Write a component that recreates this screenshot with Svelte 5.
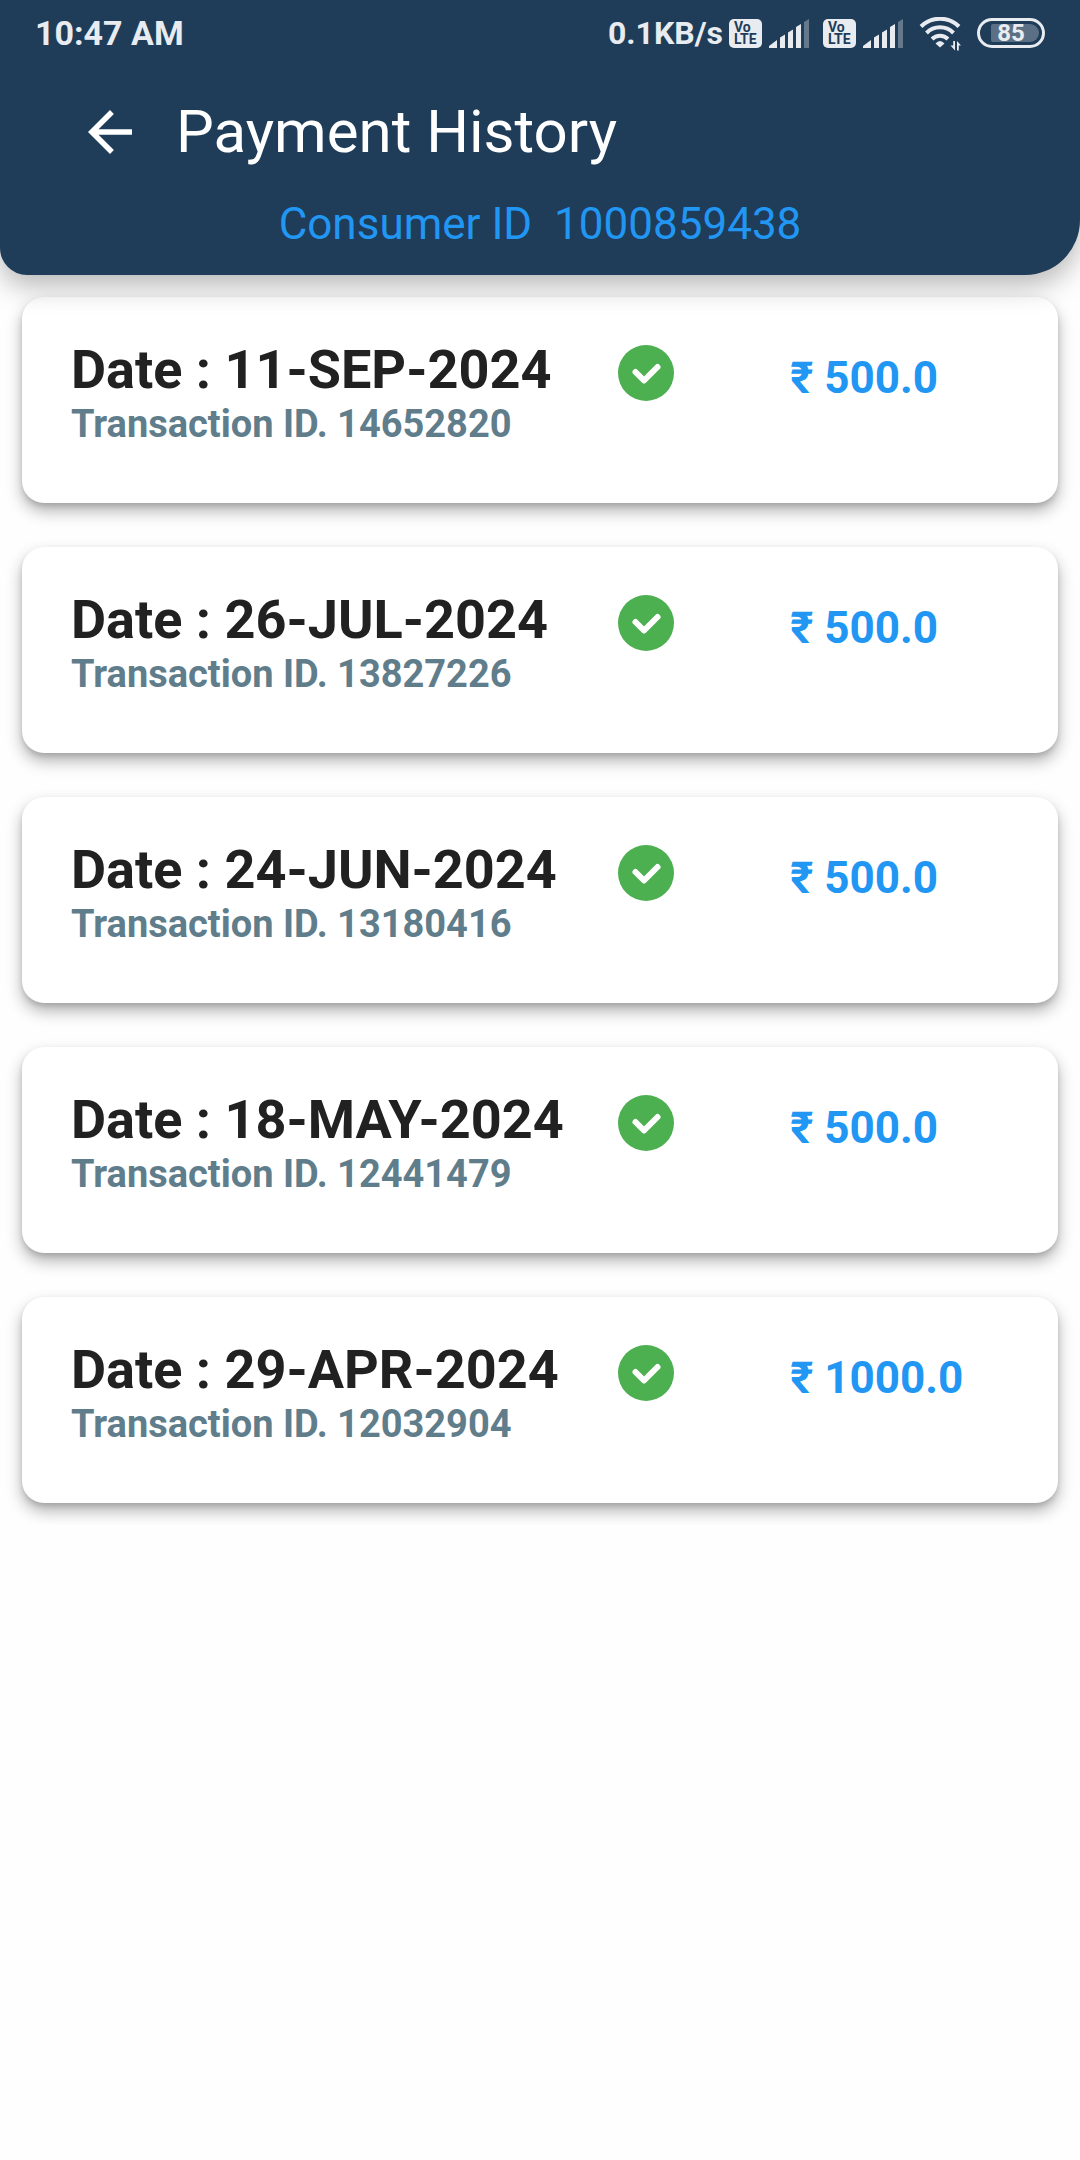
<script lang="ts">
    type Payment = {
        date: string;
        transactionId: string;
        amount: string;
    };

    const consumerId = "1000859438";
    const batteryLevel = 85;

    const payments: Payment[] = [
        { date: "11-SEP-2024", transactionId: "14652820", amount: "500.0" },
        { date: "26-JUL-2024", transactionId: "13827226", amount: "500.0" },
        { date: "24-JUN-2024", transactionId: "13180416", amount: "500.0" },
        { date: "18-MAY-2024", transactionId: "12441479", amount: "500.0" },
        { date: "29-APR-2024", transactionId: "12032904", amount: "1000.0" }
    ];
</script>

{#snippet sim()}
    <div class="sim">
        <svg class="volte" width="33" height="29" viewBox="0 0 33 29" role="img" aria-label="VoLTE">
            <rect width="33" height="29" rx="5" />
            <text x="5" y="13">Vo</text>
            <text x="5" y="25">LTE</text>
        </svg>
        <svg class="signal" width="40" height="29" viewBox="0 0 40 29" aria-hidden="true">
            <path d="M0 29V27L8 21V29Z" />
            <path d="M11 29V18.500L16 15.500V29Z" />
            <path d="M19 29V13.500L24 10.500V29Z" />
            <path d="M27 29V8L32 5V29Z" />
            <path class="off" d="M35 29V3L40 0V29Z" />
        </svg>
    </div>
{/snippet}

<header>
    <div class="status-bar">
        <span class="clock">10:47 AM</span>
        <div class="status-icons">
            <span class="speed">0.1KB/s</span>
            {@render sim()}
            {@render sim()}
            <svg class="wifi" width="42" height="34" viewBox="0 0 42 34" aria-hidden="true">
                <path class="arc" d="M2 9.500A27 27 0 0 1 40 9.500" />
                <path class="arc" d="M7.500 16A19 19 0 0 1 34.500 16" />
                <path class="arc" d="M13 22A11.500 11.500 0 0 1 29 22" />
                <path d="M21 30.500L16.500 26.500Q21 21.500 25.500 26.500Z" />
                <path d="M34.200 33.500V24H36V33.500ZM36 33.500L31.500 28.500H34.200V33.500ZM38 33.500V24L42 28.500H39.800V33.500Z" />
            </svg>
            <div class="battery">
                <span class="battery-fill" style="width: {batteryLevel}%"></span>
                <span class="battery-text">{batteryLevel}</span>
            </div>
        </div>
    </div>

    <div class="app-bar">
        <button class="back" aria-label="Back">
            <svg width="66" height="66" viewBox="0 0 24 24" aria-hidden="true">
                <path d="M20 11H7.830l5.590-5.590L12 4l-8 8 8 8 1.410-1.410L7.830 13H20v-2z" />
            </svg>
        </button>
        <h1>Payment History</h1>
    </div>
    <p class="consumer">Consumer ID&nbsp; {consumerId}</p>
</header>

<main>
    {#each payments as payment (payment.transactionId)}
        <article class="card">
            <div>
                <h2>Date : {payment.date}</h2>
                <p class="transaction">Transaction ID. {payment.transactionId}</p>
            </div>
            <svg class="check" width="56" height="56" viewBox="0 0 56 56" role="img" aria-label="Paid">
                <circle cx="28" cy="28" r="28" />
                <path d="M17.500 27L26 35.500L39.500 22" />
            </svg>
            <p class="amount">₹ {payment.amount}</p>
        </article>
    {/each}
</main>

<style>
    :global(body) {
        margin: 0;
        background: #fefefe;
        font-family: Roboto, sans-serif;
    }
    h1, h2, p {
        margin: 0;
    }
    header {
        position: relative;
        padding-bottom: 25px;
        background: #1f3c58;
        border-radius: 0 0 55px 27px;
        box-shadow: 0 11px 28px rgba(0, 0, 0, 0.28);
    }

    /* Status bar */
    .status-bar {
        display: flex;
        justify-content: space-between;
        align-items: center;
        height: 66px;
        padding: 0 35px;
        color: #e8ecf0;
        fill: #e8ecf0;
        font-size: 32px;
        font-weight: 700;
    }
    .clock {
        font-size: 34px;
    }
    .status-icons, .sim {
        display: flex;
        align-items: center;
    }
    .speed {
        padding-right: 6px;
    }
    .sim {
        gap: 7px;
        padding-right: 14px;
    }
    .volte text {
        fill: #1f3c58;
        font-size: 14px;
        font-weight: 700;
    }
    .signal .off {
        opacity: 0.35;
    }
    .wifi {
        padding: 2px 16px 0 2px;
    }
    .arc {
        fill: none;
        stroke: #e8ecf0;
        stroke-width: 4;
    }
    .battery {
        position: relative;
        display: flex;
        box-sizing: border-box;
        width: 68px;
        height: 30px;
        padding: 3px;
        justify-content: flex-end;
        border: 3px solid #e8ecf0;
        border-radius: 15px;
    }
    .battery-fill {
        border-radius: 2px 9px 9px 2px;
        background: rgba(232, 236, 240, 0.3);
    }
    .battery-text {
        position: absolute;
        inset: 0;
        font-size: 24px;
        line-height: 25px;
        text-align: center;
    }

    /* Title */
    .app-bar {
        display: flex;
        align-items: center;
        gap: 33px;
        height: 132px;
        padding: 0 77px;
    }
    .back {
        display: flex;
        padding: 0;
        border: 0;
        background: none;
        fill: white;
        cursor: pointer;
    }
    h1 {
        color: white;
        font-size: 60px;
        font-weight: 400;
        line-height: 68px;
    }
    .consumer {
        color: #2196f3;
        font-size: 44px;
        line-height: 52px;
        text-align: center;
    }

    /* Payments */
    main {
        display: flex;
        flex-direction: column;
        gap: 44px;
        padding: 22px;
    }
    .card {
        display: grid;
        grid-template-columns: 35fr 11fr 14fr;
        align-items: start;
        padding: 41px 49px 56px;
        border-radius: 22px;
        background: white;
        box-shadow: 0 8px 16px rgba(0, 0, 0, 0.3), 0 3px 5px rgba(0, 0, 0, 0.12);
    }
    h2 {
        color: #212121;
        font-size: 54px;
        font-weight: 700;
        line-height: 64px;
    }
    .transaction {
        color: #607d8b;
        font-size: 38px;
        font-weight: 700;
        line-height: 45px;
    }
    .check {
        margin-top: 7px;
        fill: #4caf50;
    }
    .check path {
        fill: none;
        stroke: white;
        stroke-width: 6;
        stroke-linecap: round;
        stroke-linejoin: round;
    }
    .amount {
        padding-top: 14px;
        color: #2196f3;
        font-size: 44px;
        font-weight: 700;
        line-height: 52px;
    }
</style>
